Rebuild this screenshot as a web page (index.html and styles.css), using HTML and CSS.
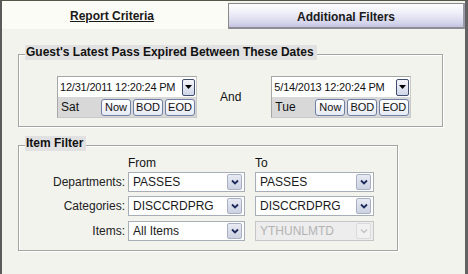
FILE: index.html
```html
<!DOCTYPE html>
<html>
<head>
<meta charset="utf-8">
<link rel="stylesheet" href="styles.css">
</head>
<body>
<div class="window">
  <div class="tabs">
    <div class="tab tab-active"><span class="tab-label">Report Criteria</span></div>
    <div class="tab tab-inactive"><span>Additional Filters</span></div>
  </div>
  <div class="content">
    <div class="group group-dates">
      <div class="legend">Guest's Latest Pass Expired Between These Dates</div>
      <div class="date-row">
        <div class="datectl">
          <div class="dc-top">
            <span class="dc-value">12/31/2011 12:20:24 PM</span>
            <span class="dd-btn"><svg width="7" height="4" viewBox="0 0 7 4"><path d="M0 0H7L3.5 4Z" fill="#000"/></svg></span>
          </div>
          <div class="dc-bottom">
            <span class="day">Sat</span>
            <span class="btns"><span class="btn">Now</span><span class="btn">BOD</span><span class="btn">EOD</span></span>
          </div>
        </div>
        <span class="and">And</span>
        <div class="datectl">
          <div class="dc-top">
            <span class="dc-value">5/14/2013 12:20:24 PM</span>
            <span class="dd-btn"><svg width="7" height="4" viewBox="0 0 7 4"><path d="M0 0H7L3.5 4Z" fill="#000"/></svg></span>
          </div>
          <div class="dc-bottom">
            <span class="day">Tue</span>
            <span class="btns"><span class="btn">Now</span><span class="btn">BOD</span><span class="btn">EOD</span></span>
          </div>
        </div>
      </div>
    </div>

    <div class="group group-items">
      <div class="legend">Item Filter</div>
      <div class="filter-grid">
        <span></span>
        <span class="head">From</span>
        <span class="head">To</span>

        <span class="lbl">Departments:</span>
        <div class="select sel-from"><span class="sel-text">PASSES</span><span class="sel-btn"><svg width="8" height="6" viewBox="0 0 8 6"><path d="M1 1.5L4 4.5L7 1.5" fill="none" stroke="#1d2b5c" stroke-width="1.8"/></svg></span></div>
        <div class="select sel-to"><span class="sel-text">PASSES</span><span class="sel-btn"><svg width="8" height="6" viewBox="0 0 8 6"><path d="M1 1.5L4 4.5L7 1.5" fill="none" stroke="#1d2b5c" stroke-width="1.8"/></svg></span></div>

        <span class="lbl">Categories:</span>
        <div class="select sel-from"><span class="sel-text">DISCCRDPRG</span><span class="sel-btn"><svg width="8" height="6" viewBox="0 0 8 6"><path d="M1 1.5L4 4.5L7 1.5" fill="none" stroke="#1d2b5c" stroke-width="1.8"/></svg></span></div>
        <div class="select sel-to"><span class="sel-text">DISCCRDPRG</span><span class="sel-btn"><svg width="8" height="6" viewBox="0 0 8 6"><path d="M1 1.5L4 4.5L7 1.5" fill="none" stroke="#1d2b5c" stroke-width="1.8"/></svg></span></div>

        <span class="lbl">Items:</span>
        <div class="select sel-from"><span class="sel-text">All Items</span><span class="sel-btn"><svg width="8" height="6" viewBox="0 0 8 6"><path d="M1 1.5L4 4.5L7 1.5" fill="none" stroke="#1d2b5c" stroke-width="1.8"/></svg></span></div>
        <div class="select sel-to disabled"><span class="sel-text">YTHUNLMTD</span><span class="sel-btn"><svg width="8" height="6" viewBox="0 0 8 6"><path d="M1 1.5L4 4.5L7 1.5" fill="none" stroke="#c4c4c4" stroke-width="1.5"/></svg></span></div>
      </div>
    </div>
  </div>
</div>
</body>
</html>
```

FILE: styles.css
```css
html, body {
  margin: 0;
  padding: 0;
  background: #f3f3ee;
}

.window {
  width: 468px;
  height: 274px;
  box-sizing: border-box;
  border-top: 1px solid #55554a;
  border-left: 2px solid #5b5b5b;
  border-right: 3px solid #626262;
  background-color: #f3f3ee;
  font-family: "Liberation Sans", Arial, sans-serif;
  font-size: 12px;
  color: #1a1a1a;
  display: flex;
  flex-direction: column;
}

.tabs {
  display: flex;
  height: 28px;
  flex: none;
}

.tab {
  display: flex;
  align-items: center;
  justify-content: center;
  font-weight: bold;
  font-size: 12px;
  box-sizing: border-box;
}

.tab-active {
  width: 226px;
  background: #fcfcf6;
  padding-right: 6px;
  padding-top: 1px;
}

.tab-label {
  text-decoration: underline;
}

.tab-inactive {
  flex: 1;
  margin-top: 2px;
  border: 1px solid #8a8a8a;
  border-bottom: 2px solid #8c8c96;
  border-right: 2px solid #9a9aa4;
  background: linear-gradient(#fdfdff 0%, #eeeef8 40%, #d6d6ec 80%, #c4c4e0 100%);
  padding-top: 2px;
}

.content {
  flex: 1;
  padding: 25px 0 0 16px;
}

.group {
  position: relative;
  border: 1px solid #a4a4a4;
  box-shadow: 1px 1px 0 #ffffff, inset 1px 1px 0 #ffffff;
}

.legend {
  position: absolute;
  top: -10px;
  left: 6px;
  background: #e1e1e1;
  font-weight: bold;
  font-size: 12px;
  line-height: 15px;
  padding: 0 3px 0 1px;
  color: #111;
}

.group-dates {
  width: 425px;
  box-sizing: border-box;
  padding: 21px 0 8px 38px;
}

.date-row {
  display: flex;
  align-items: center;
}

.datectl {
  width: 140px;
  box-sizing: border-box;
  border: 1px solid #a6a6a6;
  border-right-color: #c9c9c9;
  border-bottom-color: #c9c9c9;
}

.dc-top {
  height: 20px;
  background: #ffffff;
  display: flex;
  align-items: center;
  justify-content: space-between;
  padding: 0 1px 0 2px;
}

.dc-value {
  font-size: 11px;
  letter-spacing: -0.2px;
  color: #111;
}

.dd-btn {
  width: 11px;
  height: 15px;
  border: 1px solid #3f4c6e;
  border-radius: 2px;
  background: linear-gradient(#f4f6fb, #d0d6e8);
  display: flex;
  align-items: center;
  justify-content: center;
}

.dc-bottom {
  height: 20px;
  background: #d8d8d8;
  display: flex;
  align-items: center;
  justify-content: space-between;
  padding: 0 1px 0 3px;
}

.day {
  font-size: 12px;
  color: #111;
}

.btns {
  display: flex;
  gap: 2px;
}

.btn {
  width: 28px;
  height: 15px;
  border: 1px solid #6f80a4;
  border-radius: 3px;
  background: linear-gradient(#ffffff, #e6eaf3);
  font-size: 11px;
  line-height: 15px;
  text-align: center;
  color: #111;
}

.and {
  margin: 0 30px 0 23px;
  font-size: 12px;
  color: #111;
}

.group-items {
  width: 380px;
  box-sizing: border-box;
  margin-top: 18px;
  padding: 10px 0 9px 0;
}

.filter-grid {
  display: grid;
  grid-template-columns: 109px 127px 119px;
  grid-auto-rows: auto;
  row-gap: 4.5px;
  align-items: center;
}

.head {
  font-size: 12px;
  line-height: 14px;
  color: #111;
  margin-bottom: -3px;
}

.lbl {
  text-align: right;
  padding-right: 3px;
  font-size: 12px;
  color: #222;
}

.select {
  height: 20px;
  box-sizing: border-box;
  border: 1px solid #a8aeb8;
  background: #ffffff;
  display: flex;
  align-items: center;
  justify-content: space-between;
  padding: 0 2px 0 4px;
}

.sel-from {
  width: 117px;
}

.sel-to {
  width: 119px;
}

.sel-text {
  font-size: 12px;
  color: #1a1a1a;
}

.sel-btn {
  width: 13px;
  height: 14px;
  border: 1px solid #aab0c4;
  border-radius: 2px;
  background: linear-gradient(#e8ebf3, #ccd1e2);
  display: flex;
  align-items: center;
  justify-content: center;
}

.select.disabled {
  background: #ededed;
  border-color: #c6c6c6;
}

.select.disabled .sel-text {
  color: #b3b3b3;
}

.select.disabled .sel-btn {
  background: #f1f1f1;
  border-color: #dadada;
}
```
